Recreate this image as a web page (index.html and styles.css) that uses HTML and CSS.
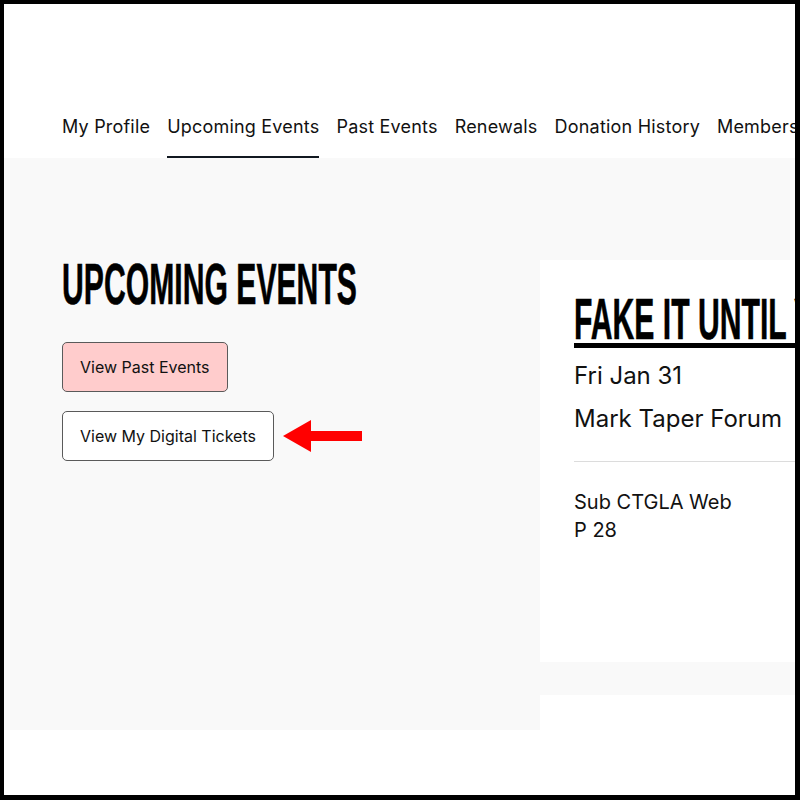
FILE: index.html
```html
<!DOCTYPE html>
<html lang="en">
<head>
<meta charset="utf-8">
<title>Upcoming Events</title>
<link rel="stylesheet" href="styles.css">
</head>
<body>
<div class="frame">
  <header class="header">
    <nav class="tabs">
      <a class="tab">My Profile</a>
      <a class="tab active">Upcoming Events</a>
      <a class="tab">Past Events</a>
      <a class="tab">Renewals</a>
      <a class="tab">Donation History</a>
      <a class="tab">Memberships</a>
    </nav>
  </header>
  <main class="main">
    <section class="left">
      <h1 class="display"><span class="squeeze">UPCOMING EVENTS</span></h1>
      <div class="actions">
        <button class="btn btn-pink">View Past Events</button>
        <div class="btn-row">
          <button class="btn btn-white">View My Digital Tickets</button>
          <svg class="arrow" width="79" height="32" viewBox="0 0 79 32"><polygon points="0,16 28,0 28,11 79,11 79,21 28,21 28,32" fill="#ff0000"/></svg>
        </div>
      </div>
    </section>
    <section class="right">
      <article class="card">
        <h2 class="display card-title"><span class="squeeze underline">FAKE IT UNTIL YOU MAKE IT</span></h2>
        <p class="meta">Fri Jan 31</p>
        <p class="meta">Mark Taper Forum</p>
        <hr class="divider">
        <p class="seat">Sub CTGLA Web<br>P 28</p>
      </article>
      <article class="card card-next"></article>
    </section>
  </main>
</div>
</body>
</html>
```

FILE: styles.css
```css
* { box-sizing: border-box; }
html, body { margin: 0; padding: 0; background: #fff; }
body { font-family: Inter, "Noto Sans", sans-serif; color: #111; }

.frame {
  width: 800px;
  height: 800px;
  border-style: solid;
  border-color: #000;
  border-width: 4px 5px 5px 4px;
  overflow: hidden;
  background: #fff;
}

.header {
  height: 154px;
  display: flex;
  align-items: flex-end;
  padding-left: 58px;
}
.tabs {
  display: flex;
  gap: 17px;
  white-space: nowrap;
}
.tab {
  font-size: 18px;
  line-height: 24px;
  padding-bottom: 17px;
  border-bottom: 2px solid transparent;
  color: #111;
  letter-spacing: 0.2px;
}
.tab.active { border-bottom-color: #111820; }

.main {
  display: flex;
  height: 572px;
  background: #f9f9f9;
}
.left {
  width: 536px;
  flex: none;
  padding: 97px 0 0 58px;
}
.right {
  flex: none;
  width: 600px;
  padding-top: 102px;
  display: flex;
  flex-direction: column;
  gap: 33px;
}

.display {
  margin: 0;
  font-family: "Liberation Sans", Arial, sans-serif;
  font-weight: 700;
  font-size: 58px;
  line-height: 58px;
  white-space: nowrap;
  color: #000;
}
.squeeze {
  display: inline-block;
  transform: scaleX(0.52);
  transform-origin: left center;
  -webkit-text-stroke: 0.6px #000;
}

.actions {
  margin-top: 29px;
  display: flex;
  flex-direction: column;
  align-items: flex-start;
  gap: 19px;
}
.btn-row {
  display: flex;
  align-items: center;
  gap: 9px;
}
.btn {
  font-family: Inter, "Noto Sans", sans-serif;
  font-size: 16px;
  line-height: 24px;
  color: #111;
  padding: 12px 17px;
  border: 1px solid #5a5a5a;
  border-radius: 5px;
  white-space: nowrap;
}
.btn-pink { background: #ffcccc; }
.btn-white { background: #fff; }
.arrow { display: block; flex: none; }

.card {
  background: #fff;
  height: 402px;
  padding: 30px 0 0 34px;
  flex: none;
}
.card-next { height: 200px; }
.underline {
  text-decoration: underline;
  text-decoration-thickness: 5px;
  text-underline-offset: 4px;
}
.meta {
  margin: 0;
  font-size: 24px;
  line-height: 43px;
  white-space: nowrap;
}
.card-title { margin-bottom: 6px; }
.divider {
  margin: 21px 0 0 0;
  border: 0;
  border-top: 1px solid #dcdcdc;
  height: 0;
}
.seat {
  margin: 26px 0 0 0;
  font-size: 20px;
  line-height: 28px;
  letter-spacing: 0;
}
```
